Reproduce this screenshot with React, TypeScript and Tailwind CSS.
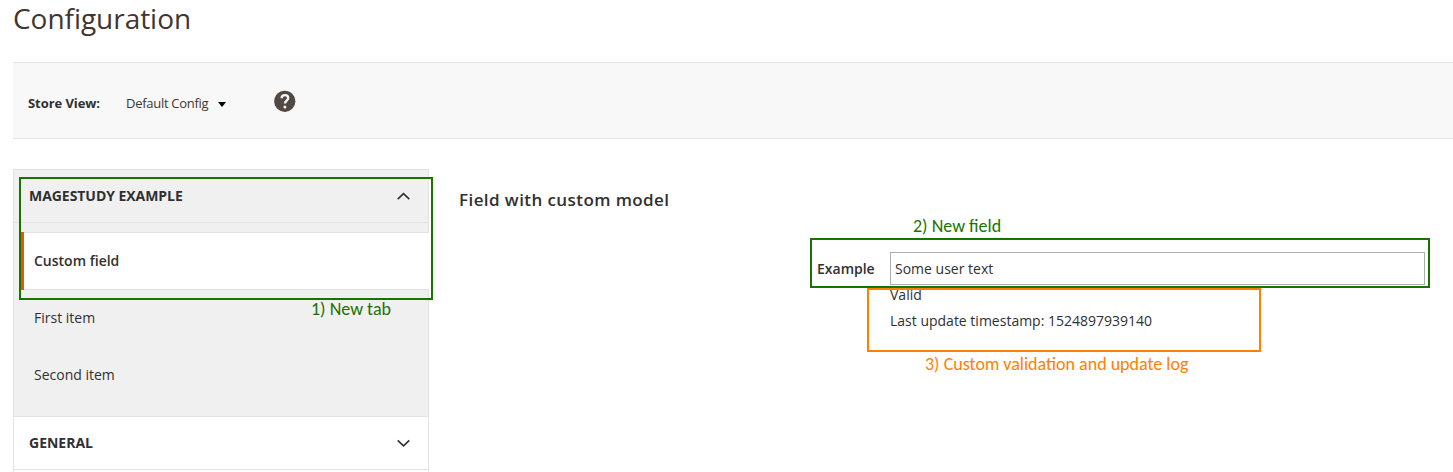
import React from 'react';

function Chevron({ up = false }: { up?: boolean }) {
  return (
    <svg width="14" height="8" viewBox="0 0 14 8" className="mr-[18px] shrink-0" fill="none" stroke="#303030" strokeWidth="1.6">
      <path d={up ? 'M1.7 7.2 7.5 1.7l5.8 5.5' : 'M1.7 1.3 7.5 6.8l5.8-5.5'} />
    </svg>
  );
}

function SidebarItem({ label }: { label: string }) {
  return <li className="flex h-[57px] items-center pb-0.5 pl-5 text-[14px] text-[#303030]">{label}</li>;
}

function Sidebar() {
  return (
    <nav className="h-[310px] w-[416px] shrink-0 border border-b-0 border-[#e3e3e3] bg-[#f0f0f0]">
      <div className="flex h-[53px] items-center justify-between border-b border-[#e3e3e3] pl-[15px]">
        <span className="pb-0.5 text-[14px] font-bold tracking-[-0.05px] text-[#303030]">MAGESTUDY EXAMPLE</span>
        <Chevron up />
      </div>
      <ul className="h-[193px] pt-[9px]">
        <li className="-mr-px ml-[7px] flex h-[58px] border-l-[3px] border-[#eb5202]">
          <span className="flex flex-1 items-center border-y border-[#e3e3e3] bg-white pb-0.5 pl-[10px] text-[14px] font-semibold text-[#303030]">
            Custom field
          </span>
        </li>
        <SidebarItem label="First item" />
        <SidebarItem label="Second item" />
      </ul>
      <div className="flex h-[54px] items-center justify-between border-y border-[#e3e3e3] bg-white pl-[15px]">
        <span className="pb-0.5 text-[14px] font-bold text-[#303030]">GENERAL</span>
        <Chevron />
      </div>
      <div className="h-[9px] bg-white" />
    </nav>
  );
}

function StoreBar() {
  return (
    <div className="flex h-[77px] items-center border-y border-[#e3e3e3] bg-[#f8f8f8] pl-[15px] text-[13px]">
      <span className="w-[98px] pt-1.5 font-bold tracking-[-0.07px] text-[#303030]">Store View:</span>
      <span className="w-[83px] pt-1.5 tracking-[-0.28px] whitespace-nowrap text-[#41362f]">Default Config</span>
      <svg width="8" height="5" viewBox="0 0 8 5" className="mt-[7px] ml-[9px]">
        <path d="M0 0h8L4 5z" fill="#000" />
      </svg>
      <svg width="22" height="22" viewBox="0 0 22 22" className="ml-12" fill="none">
        <circle cx="10.8" cy="11.3" r="10.6" fill="#514943" />
        <path d="M7.6 8.3C7.7 6.1 9 5.2 10.9 5.2s3.3 1 3.3 2.8c0 2.5-3.2 2.6-3.2 5.4" stroke="#f8f8f8" strokeWidth="2.3" />
        <circle cx="10.9" cy="16.9" r="1.5" fill="#f8f8f8" />
      </svg>
    </div>
  );
}

function Annotations() {
  return (
    <div className="pointer-events-none absolute inset-0 font-[Carlito,Lato,sans-serif] text-[18px] leading-5 whitespace-nowrap">
      <div className="absolute top-[177px] left-[19px] h-[123px] w-[414px] border-2 border-[#1a7300]" />
      <span className="absolute top-[299px] left-[311px] text-[#1a7300]">1) New tab</span>
      <div className="absolute top-[288px] left-[867px] h-16 w-[394px] border-2 border-[#ff7f00]" />
      <div className="absolute top-[238px] left-[810px] h-[50px] w-[620px] border-2 border-[#1a7300]" />
      <span className="absolute top-[216px] left-[913px] text-[#1a7300]">2) New field</span>
      <span className="absolute top-[354px] left-[925px] text-[#ff7f00]">3) Custom validation and update log</span>
    </div>
  );
}

export default function App() {
  return (
    <div className="relative h-[472px] w-full overflow-hidden bg-white pl-[13px] font-['Open_Sans',sans-serif] text-[#303030]">
      <h1 className="h-[62px] text-[28px] leading-9 font-normal tracking-[-0.04px] text-[#41362f]">Configuration</h1>
      <StoreBar />
      <div className="mt-[30px] flex">
        <Sidebar />
        <main className="flex-1 pl-[30px]">
          <h2 className="pt-[19px] text-[17px] leading-6 font-semibold tracking-[0.42px]">Field with custom model</h2>
          <div className="mt-10 flex pl-[358px] text-[14px]">
            <label className="w-[73px] pt-[7px] leading-5 font-semibold">Example</label>
            <div>
              <div className="flex h-[33px] w-[535px] items-center border border-[#adadad] bg-white pl-1">Some user text</div>
              <p className="leading-5">Valid</p>
              <p className="mt-1.5 leading-5">Last update timestamp: 1524897939140</p>
            </div>
          </div>
        </main>
      </div>
      <Annotations />
    </div>
  );
}
